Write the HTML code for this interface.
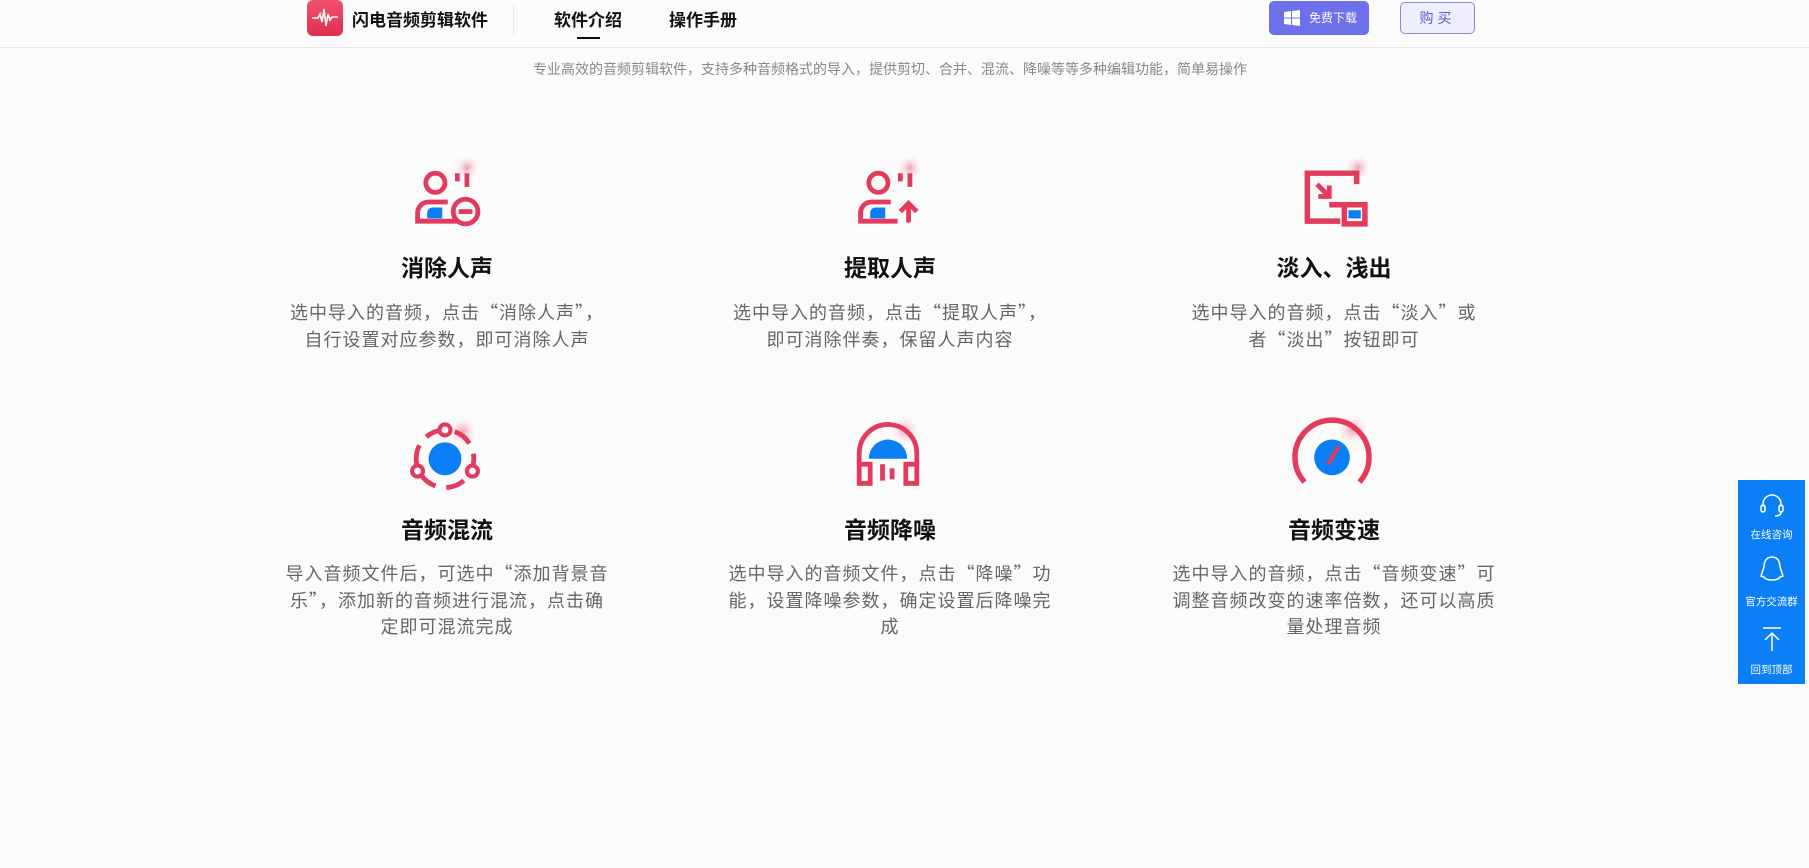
<!DOCTYPE html>
<html><head><meta charset="utf-8"><style>
*{margin:0;padding:0;box-sizing:border-box}
body{width:1809px;height:868px;overflow:hidden;background:#fbfbfc;font-family:"Liberation Sans","Noto Sans CJK SC",sans-serif;position:relative}
.hdr{position:absolute;left:0;top:0;width:1809px;height:48px;border-bottom:1px solid #e6e6e6;background:#fbfbfc}
.logo{position:absolute;left:307px;top:0;width:36px;height:36px;border-radius:6px;background:linear-gradient(#f0506e,#e0304f)}
.lt{position:absolute;left:352px;top:6px;font-size:17px;color:#111;font-weight:bold}
.div{position:absolute;left:513px;top:6px;width:1px;height:28px;background:#e4e4e4}
.nav{position:absolute;top:6px;font-size:17px;font-weight:bold;color:#111}
.ul{position:absolute;left:577px;top:37px;width:23px;height:2px;background:#111}
.dl{position:absolute;left:1269px;top:1px;width:100px;height:34px;background:#6c70ea;border-radius:5px;color:#fff;font-size:12px;line-height:34px;padding-left:40px}
.buy{position:absolute;left:1400px;top:2px;width:75px;height:32px;background:#eeeefc;border:1px solid #8a8ad6;border-radius:5px;color:#5d5fd0;font-size:14px;text-align:center;line-height:30px;letter-spacing:4px}
.sub{position:absolute;top:59px;left:0;width:1780px;text-align:center;font-size:14px;color:#888;font-family:"Noto Sans CJK SC",sans-serif}
.c{position:absolute;width:400px;height:400px}
.c svg{position:absolute;left:150px}
.c h3{position:absolute;left:0;width:400px;text-align:center;font-size:23px;color:#111;line-height:30px}
.c p{position:absolute;left:0;width:400px;text-align:center;font-size:18px;letter-spacing:1px;color:#666;line-height:26.5px;white-space:nowrap;font-family:"Noto Sans CJK SC",sans-serif}
.side{position:absolute;left:1738px;top:480px;width:67px;height:204px;background:#0b7ff5;color:#fff;font-size:10.5px;text-align:center}
.side div{position:absolute;left:0;width:67px}
</style></head><body>
<div class="hdr">
<div class="logo"><svg width="36" height="36" viewBox="0 0 32 36"><path d="M3 18h6l2-4 2 8 2-13 2 17 2-12 2 6 2-3h6" stroke="#fff" stroke-width="1.6" fill="none"/></svg></div>
<div class="lt">闪电音频剪辑软件</div>
<div class="div"></div>
<div class="nav" style="left:554px">软件介绍</div>
<div class="ul"></div>
<div class="nav" style="left:669px">操作手册</div>
<div class="dl"><svg style="position:absolute;left:15px;top:9px" width="16" height="16" viewBox="0 0 16 16"><path d="M0 2l7-1v6.5H0zM8 1l8-1v7.5H8zM0 8.5h7V15l-7-1zM8 8.5h8V16l-8-1z" fill="#fff"/></svg>免费下载</div>
<div class="buy">购买</div>
</div>
<div class="sub">专业高效的音频剪辑软件，支持多种音频格式的导入，提供剪切、合并、混流、降噪等等多种编辑功能，简单易操作</div>

<svg width="0" height="0" style="position:absolute"><defs><radialGradient id="g"><stop offset="0" stop-color="#f0a0b4"/><stop offset="1" stop-color="#fbe6ec" stop-opacity="0"/></radialGradient></defs></svg>

<div class="c" style="left:247px;top:0">
<svg style="top:154px" width="96" height="85" viewBox="0 0 70 62"><circle cx="51" cy="10" r="9" fill="url(#g)"/><circle cx="28" cy="21" r="7" fill="none" stroke="#e23b5d" stroke-width="3.5"/><path d="M44 14v6M51 14v10" stroke="#e23b5d" stroke-width="3.5"/><path d="M44 49H15v-6a8 8 0 0 1 8-8h14" fill="none" stroke="#e23b5d" stroke-width="3.5"/><path d="M22 47v-4a4 4 0 0 1 4-4h7v8z" fill="#0b7ff5"/><circle cx="50" cy="42" r="9" fill="none" stroke="#e23b5d" stroke-width="3.5"/><path d="M45 42h10" stroke="#e23b5d" stroke-width="3.5"/></svg>
<h3 style="top:253px">消除人声</h3><p style="top:299px">选中导入的音频，点击“消除人声”，<br>自行设置对应参数，即可消除人声</p></div>

<div class="c" style="left:690px;top:0">
<svg style="top:154px" width="96" height="85" viewBox="0 0 70 62"><circle cx="51" cy="10" r="9" fill="url(#g)"/><circle cx="28" cy="21" r="7" fill="none" stroke="#e23b5d" stroke-width="3.5"/><path d="M44 14v6M51 14v10" stroke="#e23b5d" stroke-width="3.5"/><path d="M42 49H15v-6a8 8 0 0 1 8-8h14" fill="none" stroke="#e23b5d" stroke-width="3.5"/><path d="M22 47v-4a4 4 0 0 1 4-4h7v8z" fill="#0b7ff5"/><path d="M50 50V37M44 42l6-6 6 6" fill="none" stroke="#e23b5d" stroke-width="3.5"/></svg>
<h3 style="top:253px">提取人声</h3><p style="top:299px">选中导入的音频，点击“提取人声”，<br>即可消除伴奏，保留人声内容</p></div>

<div class="c" style="left:1134px;top:0">
<svg style="top:154px" width="96" height="85" viewBox="0 0 70 62"><circle cx="54" cy="10" r="9" fill="url(#g)"/><path d="M41 49H17V14h36v8" fill="none" stroke="#e23b5d" stroke-width="4"/><path d="M33 37H44V51H59V37H44" fill="none" stroke="#e23b5d" stroke-width="4"/><rect x="47" y="41" width="9" height="6" fill="#0b7ff5"/><path d="M24 22l8 8M33 23v8h-8" fill="none" stroke="#e23b5d" stroke-width="3.5"/></svg>
<h3 style="top:253px">淡入、浅出</h3><p style="top:299px">选中导入的音频，点击“淡入”或<br>者“淡出”按钮即可</p></div>

<div class="c" style="left:247px;top:0">
<svg style="top:412px" width="96" height="88" viewBox="0 0 70 64"><circle cx="48" cy="14" r="10" fill="url(#g)"/><circle cx="35" cy="34" r="21" fill="none" stroke="#e23b5d" stroke-width="3.5" stroke-dasharray="14 8" stroke-dashoffset="4"/><circle cx="35" cy="34" r="12" fill="#0b7ff5"/><circle cx="35" cy="13" r="4" fill="#fbfbfc" stroke="#e23b5d" stroke-width="3"/><circle cx="15" cy="43" r="4" fill="#fbfbfc" stroke="#e23b5d" stroke-width="3"/><circle cx="55" cy="43" r="4" fill="#fbfbfc" stroke="#e23b5d" stroke-width="3"/></svg>
<h3 style="top:515px">音频混流</h3><p style="top:560px">导入音频文件后，可选中“添加背景音<br>乐”，添加新的音频进行混流，点击确<br>定即可混流完成</p></div>

<div class="c" style="left:690px;top:0">
<svg style="top:412px" width="96" height="88" viewBox="0 0 70 64"><circle cx="47" cy="13" r="10" fill="url(#g)"/><path d="M14 37V30a21 21 0 0 1 42 0v7" fill="none" stroke="#e23b5d" stroke-width="3.5"/><path d="M21 34a14 14 0 0 1 28 0z" fill="#0b7ff5"/><rect x="14" y="38" width="8" height="14" fill="none" stroke="#e23b5d" stroke-width="3.5"/><rect x="48" y="38" width="8" height="14" fill="none" stroke="#e23b5d" stroke-width="3.5"/><path d="M31 38v12M38 41v8" stroke="#e23b5d" stroke-width="3.5"/></svg>
<h3 style="top:515px">音频降噪</h3><p style="top:560px">选中导入的音频文件，点击“降噪”功<br>能，设置降噪参数，确定设置后降噪完<br>成</p></div>

<div class="c" style="left:1134px;top:0">
<svg style="top:412px" width="96" height="88" viewBox="0 0 70 64"><circle cx="50" cy="13" r="11" fill="url(#g)"/><path d="M15 51A27 27 0 1 1 55 51" fill="none" stroke="#e23b5d" stroke-width="4"/><circle cx="35" cy="33" r="13" fill="#0b7ff5"/><path d="M40 25l-8 13" stroke="#e23b5d" stroke-width="3"/></svg>
<h3 style="top:515px">音频变速</h3><p style="top:560px">选中导入的音频，点击“音频变速”可<br>调整音频改变的速率倍数，还可以高质<br>量处理音频</p></div>

<div class="side">
<div style="top:12px"><svg width="28" height="26" viewBox="0 0 28 26"><path d="M5 15v-3a9 9 0 0 1 18 0v3" fill="none" stroke="#fff" stroke-width="1.5"/><rect x="3" y="13" width="4" height="7" rx="2" fill="none" stroke="#fff" stroke-width="1.5"/><rect x="21" y="13" width="4" height="7" rx="2" fill="none" stroke="#fff" stroke-width="1.5"/><path d="M23 20q0 4-6 4" fill="none" stroke="#fff" stroke-width="1.5"/></svg></div>
<div style="top:47px">在线咨询</div>
<div style="top:75px"><svg width="28" height="30" viewBox="0 0 28 30"><path d="M14 2c-6 0-8 5-8 10l-3 9 3 1c2 4 14 4 16 0l3-1-3-9c0-5-2-10-8-10z" fill="none" stroke="#fff" stroke-width="1.5"/></svg></div>
<div style="top:114px">官方交流群</div>
<div style="top:145px"><svg width="26" height="28" viewBox="0 0 26 28"><path d="M4 3h18M13 26V8M6 15l7-7 7 7" fill="none" stroke="#fff" stroke-width="1.5"/></svg></div>
<div style="top:182px">回到顶部</div>
</div>
</body></html>
